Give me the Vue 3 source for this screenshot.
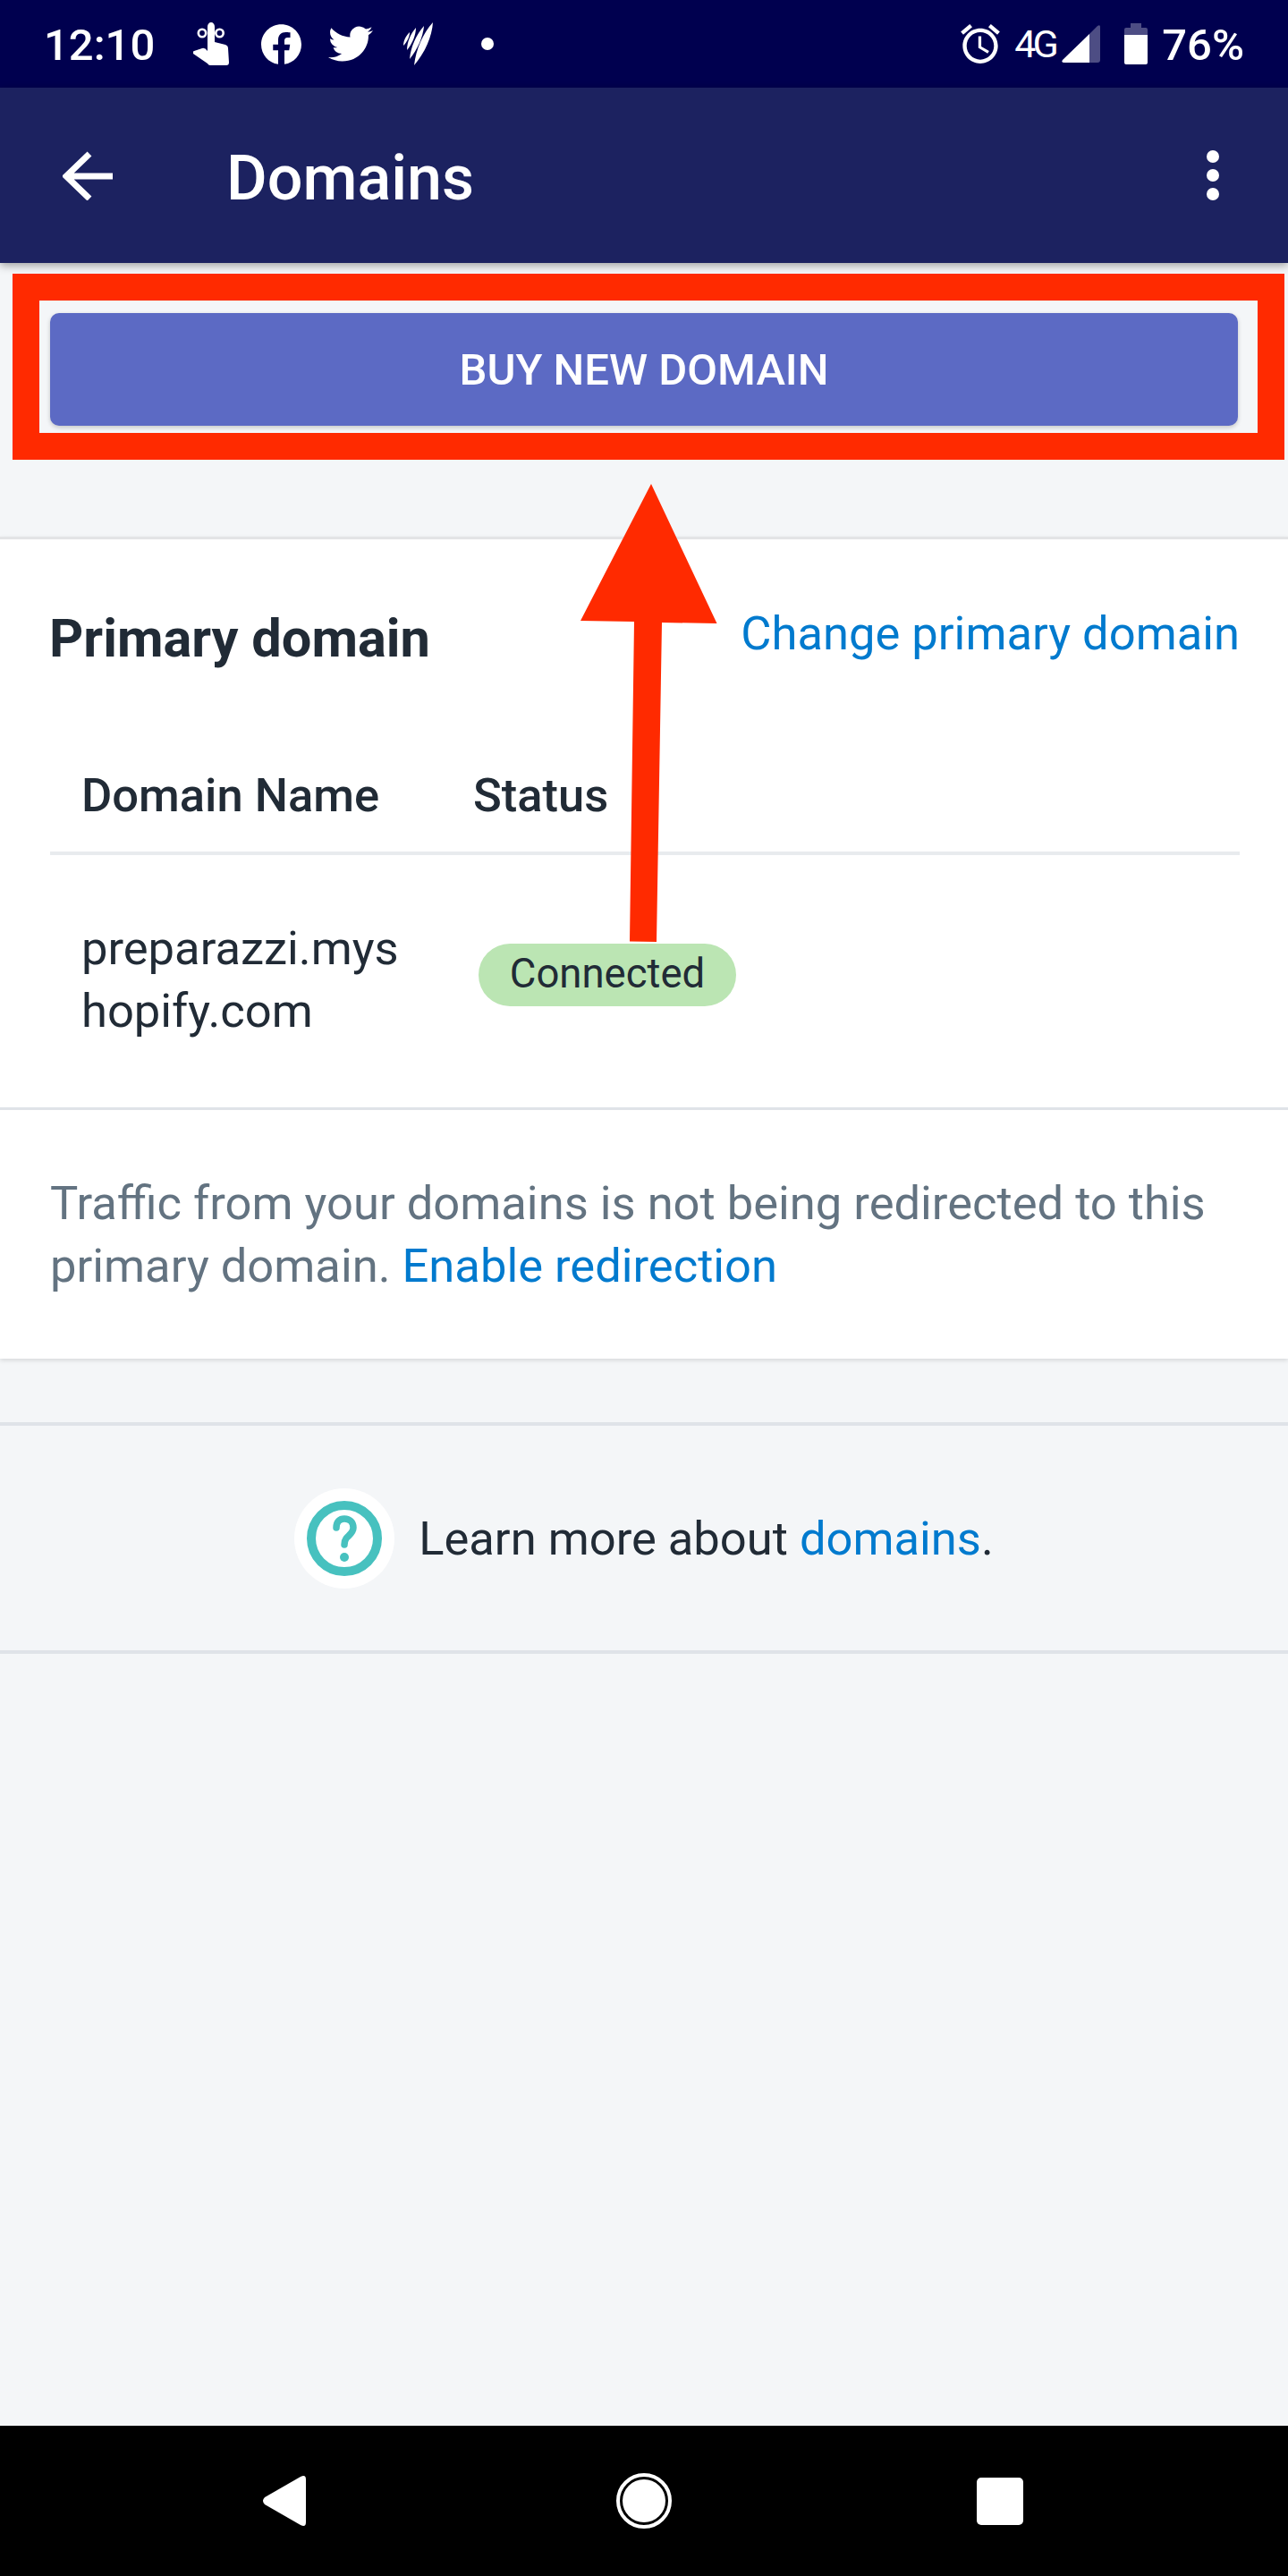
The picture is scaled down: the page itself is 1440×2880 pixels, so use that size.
<script setup>
const domains = [
  { name: 'preparazzi.myshopify.com', status: 'Connected' }
]
</script>

<template>
  <div class="phone">
    <div class="status-bar">
      <span class="time">12:10</span>
      <svg class="ic-hand" viewBox="0 0 40 48">
        <path fill="#fff" d="M16 32V5a4 5 0 0 1 8 0V22L36 25q3 1 3 4L40 45q0 3-3 3H19q-2 0-3-2L0 35q-1-2 1-3L10 29q3-1 6 3z" />
        <circle cx="10" cy="12" r="4.2" fill="none" stroke="#fff" stroke-width="2.6" />
        <circle cx="29.5" cy="12" r="4.2" fill="none" stroke="#fff" stroke-width="2.6" />
      </svg>
      <svg class="ic-fb" viewBox="0 0 24 24">
        <path fill="#fff" d="M24 12.073c0-6.627-5.373-12-12-12s-12 5.373-12 12c0 5.99 4.388 10.954 10.125 11.854v-8.385H7.078v-3.47h3.047V9.43c0-3.007 1.792-4.669 4.533-4.669 1.312 0 2.686.235 2.686.235v2.953H15.83c-1.491 0-1.956.925-1.956 1.874v2.25h3.328l-.532 3.47h-2.796v8.385C19.612 23.027 24 18.062 24 12.073z" />
      </svg>
      <svg class="ic-tw" viewBox="0 2 24 20" preserveAspectRatio="none">
        <path fill="#fff" d="M23.953 4.57a10 10 0 01-2.825.775 4.958 4.958 0 002.163-2.723c-.951.555-2.005.959-3.127 1.184a4.92 4.92 0 00-8.384 4.482C7.69 8.095 4.067 6.13 1.64 3.162a4.822 4.822 0 00-.666 2.475c0 1.71.87 3.213 2.188 4.096a4.904 4.904 0 01-2.228-.616v.06a4.923 4.923 0 003.946 4.827 4.996 4.996 0 01-2.212.085 4.936 4.936 0 004.604 3.417 9.867 9.867 0 01-6.102 2.105c-.39 0-.779-.023-1.17-.067a13.995 13.995 0 007.557 2.209c9.053 0 13.998-7.496 13.998-13.985 0-.21 0-.42-.015-.63A9.935 9.935 0 0024 4.59z" />
      </svg>
      <svg class="ic-sbs" viewBox="0 0 33 49">
        <path fill="#fff" d="M33 0C32 16 24 34 12 48C14 30 22 12 33 0z" />
        <path fill="#fff" d="M23 4C22 16 16 30 7 41C8 28 14 14 23 4z" />
        <path fill="#fff" d="M14 6C14 14 10 24 4 31C4 22 8 13 14 6z" />
        <path fill="#fff" d="M7 11C7 16 4 22 0 26C0 20 3 15 7 11z" />
      </svg>
      <span class="dot"></span>

      <div class="status-right">
        <svg class="ic-alarm" viewBox="2 1.86 20 20.14">
          <path fill="#fff" d="M22 5.72l-4.6-3.86-1.29 1.53 4.6 3.86L22 5.72zM7.88 3.39L6.6 1.86 2 5.71l1.29 1.53 4.59-3.85zM12.5 8H11v6l4.75 2.85.75-1.23-4-2.37V8zM12 4c-4.97 0-9 4.03-9 9s4.03 9 9 9 9-4.03 9-9-4.03-9-9-9zm0 16c-3.87 0-7-3.13-7-7s3.13-7 7-7 7 3.13 7 7-3.13 7-7 7z" />
        </svg>
        <span class="net">4G</span>
        <svg class="ic-signal" viewBox="0 0 43 42">
          <path fill="#fff" fill-opacity="0.3" d="M31 10L40 1q3-2 3 1v37q0 3-3 3h-9z" />
          <path fill="#fff" d="M31 10v32H3q-4 0-2-3z" />
        </svg>
        <svg class="ic-battery" viewBox="0 0 26 46">
          <path fill="#fff" fill-opacity="0.3" d="M7 0h12v5h5q2 0 2 2v6H0V7q0-2 2-2h5z" />
          <path fill="#fff" d="M0 13h26v31q0 2-2 2H2q-2 0-2-2z" />
        </svg>
        <span class="batt-text">76%</span>
      </div>
    </div>

    <header class="top-bar">
      <svg class="ic-back" viewBox="0 0 56 55">
        <path fill="none" stroke="#fff" stroke-width="7" d="M56 28H5M30 3L4 28l26 25" />
      </svg>
      <h1 class="title">Domains</h1>
      <div class="menu-dots">
        <span></span>
        <span></span>
        <span></span>
      </div>
    </header>

    <div class="buy-wrap">
      <button class="buy-btn">BUY NEW DOMAIN</button>
    </div>

    <section class="card">
      <div class="card-head">
        <h2 class="card-title">Primary domain</h2>
        <a class="link">Change primary domain</a>
      </div>

      <div class="table-row table-head">
        <span>Domain Name</span>
        <span>Status</span>
      </div>
      <div v-for="d in domains" :key="d.name" class="table-row table-body">
        <span class="domain-name">{{ d.name }}</span>
        <span class="badge">{{ d.status }}</span>
      </div>

      <p class="note">
        Traffic from your domains is not being redirected to this primary domain.
        <a class="link">Enable redirection</a>
      </p>
    </section>

    <div class="learn">
      <span class="learn-icon">
        <svg viewBox="0 0 112 112">
          <circle cx="56" cy="56" r="37" fill="none" stroke="#47c1bf" stroke-width="10" />
          <path fill="none" stroke="#47c1bf" stroke-width="7.5" stroke-linecap="round" d="M47 44c0-7 4-10 9-10 6 0 10 4 10 10 0 6-6 9-8 12-1.5 2-2 4-2 7" />
          <circle cx="56" cy="77" r="5" fill="#47c1bf" />
        </svg>
      </span>
      <span class="learn-text">Learn more about <a class="link">domains</a>.</span>
    </div>

    <nav class="nav-bar">
      <svg class="nav-back" viewBox="0 0 48 56">
        <path fill="#fff" d="M42 1q6-3 6 3v48q0 6-6 3L2 32q-4-4 0-8z" />
      </svg>
      <svg class="nav-home" viewBox="0 0 62 62">
        <circle cx="31" cy="31" r="29" fill="none" stroke="#fff" stroke-width="4" />
        <circle cx="31" cy="31" r="24" fill="#fff" />
      </svg>
      <span class="nav-square"></span>
    </nav>

    <!-- annotation drawn over the screenshot -->
    <div class="red-frame"></div>
    <svg class="red-arrow" viewBox="0 0 1440 2880">
      <path fill="#ff2a00" d="M728 541L801.5 697 740 696 734 1053 704 1052.5 709 695 649 694z" />
    </svg>
  </div>
</template>

<style scoped>
.phone {
  position: relative;
  width: 1440px;
  height: 2880px;
  display: flex;
  flex-direction: column;
  background: #f4f6f8;
  font-family: Roboto, "Liberation Sans", sans-serif;
  color: #212b36;
  overflow: hidden;
}

.status-bar {
  height: 98px;
  flex-shrink: 0;
  display: flex;
  align-items: center;
  padding: 0 49px 0 51px;
  box-sizing: border-box;
  background: #00004f;
  color: #fff;
}

.time {
  font-size: 49px;
  font-weight: 500;
  width: 121px;
  margin-left: -2px;
  padding-right: 2px;
  padding-top: 3px;
}

.ic-hand {
  width: 40px;
  height: 48px;
  margin-left: 44px;
}

.ic-fb {
  width: 45px;
  height: 45px;
  margin-left: 36px;
}

.ic-tw {
  width: 50px;
  height: 40px;
  margin-left: 30px;
}

.ic-sbs {
  width: 33px;
  height: 49px;
  margin-left: 34px;
}

.dot {
  width: 14px;
  height: 14px;
  border-radius: 50%;
  background: #fff;
  margin-left: 54px;
}

.status-right {
  margin-left: auto;
  display: flex;
  align-items: center;
}

.ic-alarm {
  width: 44px;
  height: 44px;
}

.net {
  font-size: 43px;
  letter-spacing: -4px;
  margin-left: 16px;
  width: 44px;
}

.ic-signal {
  width: 43px;
  height: 42px;
  margin-left: 9px;
}

.ic-battery {
  width: 26px;
  height: 46px;
  margin-left: 27px;
}

.batt-text {
  font-size: 49px;
  font-weight: 500;
  margin-left: 16px;
  padding-top: 3px;
}

.top-bar {
  height: 196px;
  flex-shrink: 0;
  display: flex;
  align-items: center;
  padding: 0 77px 0 70px;
  box-sizing: border-box;
  background: #1c2260;
  box-shadow: 0 3px 9px rgba(0, 0, 0, 0.35);
  position: relative;
}

.ic-back {
  width: 56px;
  height: 55px;
}

.title {
  margin: 5px 0 0 127px;
  font-size: 70px;
  font-weight: 500;
  color: #fff;
}

.menu-dots {
  margin-left: auto;
  display: flex;
  flex-direction: column;
  gap: 7px;
}

.menu-dots span {
  width: 14px;
  height: 14px;
  border-radius: 50%;
  background: #fff;
}

.buy-wrap {
  padding: 56px 56px 124px;
}

.buy-btn {
  display: block;
  width: 100%;
  height: 126px;
  border: none;
  border-radius: 10px;
  background: #5c6ac4;
  box-shadow: 0 2px 5px rgba(0, 0, 0, 0.2);
  color: #fff;
  font-family: inherit;
  font-size: 49px;
  font-weight: 500;
}

.card {
  background: #fff;
  border-top: 3px solid #e3e4e6;
  box-shadow: 0 2px 5px rgba(0, 0, 0, 0.12);
}

.card-head {
  display: flex;
  justify-content: space-between;
  align-items: flex-start;
  padding: 70px 54px 0 55px;
}

.card-title {
  margin: 6px 0 0;
  font-size: 59.5px;
  line-height: 70px;
  font-weight: 700;
}

.link {
  color: #007ace;
  font-size: 52.5px;
  line-height: 70px;
}

.table-row {
  display: grid;
  grid-template-columns: 438px 1fr;
  font-size: 52.5px;
  line-height: 70px;
}

.table-head {
  margin: 105px 54px 0 56px;
  padding-bottom: 28px;
  border-bottom: 4px solid #e8ebee;
  font-weight: 500;
}

.table-head span {
  padding-left: 35px;
}

.table-body {
  padding: 69px 0 73px 56px;
  align-items: center;
  border-bottom: 3px solid #dfe3e8;
}

.domain-name {
  padding: 0 35px;
  word-break: break-all;
}

.badge {
  justify-self: start;
  margin: 0 0 10px 41px;
  width: 288px;
  height: 70px;
  line-height: 67px;
  text-align: center;
  border-radius: 35px;
  background: #bbe5b3;
  font-size: 45.5px;
}

.note {
  margin: 0;
  padding: 69px 56px 69px 56px;
  font-size: 52.5px;
  line-height: 70px;
  color: #637381;
}

.learn {
  margin-top: 71px;
  height: 251px;
  display: flex;
  align-items: center;
  justify-content: center;
  border-top: 4px solid #dfe3e8;
  border-bottom: 4px solid #dfe3e8;
}

.learn-icon {
  width: 112px;
  height: 112px;
  border-radius: 50%;
  background: #fff;
}

.learn-icon svg {
  display: block;
}

.learn-text {
  margin-left: 27px;
  font-size: 52.5px;
  line-height: 70px;
}

.nav-bar {
  margin-top: auto;
  height: 168px;
  flex-shrink: 0;
  display: flex;
  align-items: center;
  padding-left: 294px;
  background: #000;
}

.nav-back {
  width: 48px;
  height: 56px;
}

.nav-home {
  width: 62px;
  height: 62px;
  margin-left: 347px;
}

.nav-square {
  width: 52px;
  height: 53px;
  margin-left: 341px;
  border-radius: 5px;
  background: #fff;
}

.red-frame {
  position: absolute;
  left: 14px;
  top: 306px;
  width: 1422px;
  height: 208px;
  box-sizing: border-box;
  border: 30px solid #ff2a00;
}

.red-arrow {
  position: absolute;
  left: 0;
  top: 0;
  width: 1440px;
  height: 2880px;
  pointer-events: none;
}
</style>
